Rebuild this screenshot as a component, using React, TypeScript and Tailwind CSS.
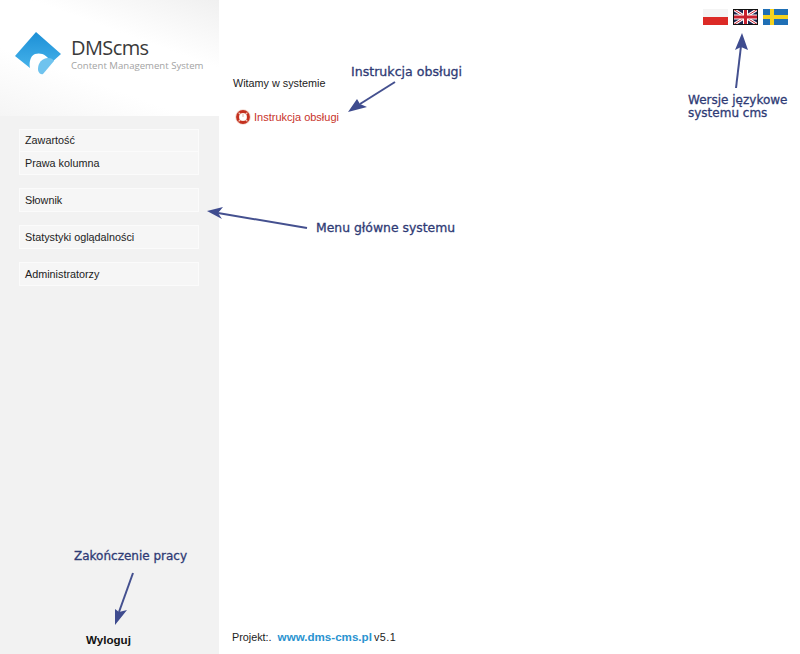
const menuGroups = [
  ['Zawartość', 'Prawa kolumna'],
  ['Słownik'],
  ['Statystyki oglądalności'],
  ['Administratorzy'],
];

// Blue hand-drawn callouts that sit over the page
const arrows = [
  { line: 'M395 82 L360 104', head: '348,112 357,99 360,104 367,107' },
  { line: 'M736 88 L741 46', head: '742,33 735,50 741,47 748,50' },
  { line: 'M307 228 L218 213', head: '207,211 223,207 218,213 222,219' },
  { line: 'M133 573 L119 612', head: '115,625 115,609 119,612 127,610' },
];

function Note({ className, children }: { className: string; children: React.ReactNode }) {
  return (
    <div className={`absolute font-['DejaVu_Sans',sans-serif] leading-[13px] text-[#2f3b75] [-webkit-text-stroke:0.3px_#2f3b75] ${className}`}>
      {children}
    </div>
  );
}

function Logo() {
  return (
    <div className="flex items-center pl-[15px] pt-[32px]">
      <svg width="47" height="44" viewBox="0 0 47 44" className="shrink-0">
        <defs>
          <linearGradient id="logoBlue" x1="0" y1="0" x2="0" y2="1">
            <stop offset="0" stopColor="#1c8fd6" />
            <stop offset="1" stopColor="#45b2ea" />
          </linearGradient>
        </defs>
        <path d="M21 0 L46 22 L36 31 C33 23 26 20 20 22 C15 24 14 31 15 36 L0 24 Z" fill="url(#logoBlue)" />
        <path d="M23 37 C23 31 27 26 33 26 C36 26 38 27 39 29 L28 42 C25 43 23 40 23 37 Z" fill="#6fc3ee" />
      </svg>
      <div className="ml-[9px]">
        <div className="font-['Open_Sans',sans-serif] text-[20px] leading-[20px] tracking-[-0.6px] text-[#3a3a3a]">DMScms</div>
        <div className="mt-[2px] font-['Open_Sans',sans-serif] text-[9.6px] leading-[11px] text-[#a3a3a3]">Content Management System</div>
      </div>
    </div>
  );
}

function Flag({ kind }: { kind: 'pl' | 'en' | 'sv' }) {
  if (kind === 'pl') {
    return (
      <svg width="25" height="16" viewBox="0 0 25 16">
        <rect width="25" height="8" fill="#f4f4f4" />
        <rect y="8" width="25" height="8" fill="#dc2a26" />
      </svg>
    );
  }
  if (kind === 'sv') {
    return (
      <svg width="25" height="16" viewBox="0 0 25 16">
        <rect width="25" height="16" fill="#1f6fb5" />
        <rect x="7" width="4" height="16" fill="#f4d21f" />
        <rect y="6" width="25" height="4" fill="#f4d21f" />
      </svg>
    );
  }
  return (
    <svg width="25" height="16" viewBox="0 0 25 16">
      <rect width="25" height="16" fill="#1d2350" />
      <path d="M0 0 L25 16 M25 0 L0 16" stroke="#fff" strokeWidth="3" />
      <path d="M0 0 L25 16 M25 0 L0 16" stroke="#c8202f" strokeWidth="1" />
      <path d="M12.5 0 V16 M0 8 H25" stroke="#fff" strokeWidth="5" />
      <path d="M12.5 0 V16 M0 8 H25" stroke="#c8202f" strokeWidth="3" />
      <rect x="0.5" y="0.5" width="24" height="15" fill="none" stroke="#111" />
    </svg>
  );
}

function Lifebuoy() {
  return (
    <svg width="16" height="16" viewBox="0 0 16 16" className="shrink-0">
      <circle cx="8" cy="8" r="7.8" fill="#f3d9cf" />
      <circle cx="8" cy="8" r="5.4" fill="none" stroke="#c4301f" strokeWidth="3" />
      <path d="M3.6 3.6 L5.5 5.5 M12.4 3.6 L10.5 5.5 M3.6 12.4 L5.5 10.5 M12.4 12.4 L10.5 10.5" stroke="#f0c8bc" strokeWidth="1.2" />
      <circle cx="8" cy="8" r="3.6" fill="#fff" />
      <path d="M8 5 V8" stroke="#d9b0a5" strokeWidth="1" />
    </svg>
  );
}

export default function App() {
  return (
    <div className="relative flex h-[654px] w-[800px] overflow-hidden bg-white font-['Liberation_Sans',sans-serif] text-[10.8px] text-[#222]">
      <aside className="flex w-[219px] shrink-0 flex-col bg-[#f2f2f2]">
        <div className="h-[116px] bg-[linear-gradient(200deg,#f0f0f0_0%,#ffffff_35%,#ffffff_65%,#f5f5f5_100%)]">
          <Logo />
        </div>
        <nav className="ml-[19px] mt-[13px] flex w-[180px] flex-col gap-[13px]">
          {menuGroups.map((group) => (
            <div key={group[0]} className="divide-y divide-[#fbfbfb] border border-[#fbfbfb] bg-[#f6f6f6]">
              {group.map((item) => (
                <div key={item} className="flex h-[22px] items-center pl-[5px]">
                  {item}
                </div>
              ))}
            </div>
          ))}
        </nav>
        <div className="mt-auto pb-[8px] pl-[86px] text-[11.6px] font-bold leading-[13px] text-[#111]">Wyloguj</div>
      </aside>

      <main className="flex flex-1 flex-col pl-[13px]">
        <div className="flex justify-end gap-[5px] pr-[12px] pt-[9px]">
          <Flag kind="pl" />
          <Flag kind="en" />
          <Flag kind="sv" />
        </div>
        <p className="ml-[1px] mt-[52px] leading-[13px]">Witamy w systemie</p>
        <a className="ml-[3px] mt-[19px] flex items-center gap-[3px] text-[11px] text-[#c8332a]">
          <Lifebuoy />
          Instrukcja obsługi
        </a>
        <div className="mt-auto flex items-baseline pb-[10px] leading-[13px]">
          Projekt:.
          <span className="ml-[6px] text-[11.6px] font-bold text-[#2a93d0]">www.dms-cms.pl</span>
          <span className="ml-[2px] tracking-[0.5px]">v5.1</span>
        </div>
      </main>

      <svg className="pointer-events-none absolute left-0 top-0" width="800" height="654" viewBox="0 0 800 654">
        {arrows.map((a) => (
          <g key={a.line}>
            <path d={a.line} stroke="#44508f" strokeWidth="2" fill="none" />
            <polygon points={a.head} fill="#3f4c8f" />
          </g>
        ))}
      </svg>
      <Note className="left-[351px] top-[65px] text-[12.6px]">Instrukcja obsługi</Note>
      <Note className="left-[316px] top-[221px] text-[12.4px]">Menu główne systemu</Note>
      <Note className="left-[688px] top-[94px] text-[12px]">
        Wersje językowe
        <br />
        systemu cms
      </Note>
      <Note className="left-[74px] top-[550px] text-[12px]">Zakończenie pracy</Note>
    </div>
  );
}
